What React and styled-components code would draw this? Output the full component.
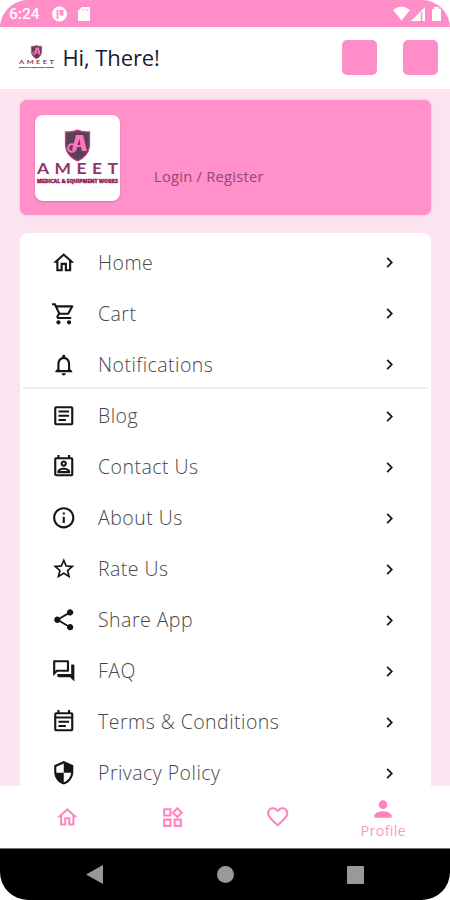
import React from "react";
import styled, { createGlobalStyle } from "styled-components";
import {
  MdOutlineHome, MdOutlineShoppingCart, MdNotificationsNone, MdOutlineArticle,
  MdOutlinePermContactCalendar, MdInfoOutline, MdStarOutline, MdShare,
  MdOutlineForum, MdOutlineEventNote, MdSecurity, MdChevronRight,
  MdOutlineWidgets, MdFavoriteBorder, MdPerson,
} from "react-icons/md";

const Global = createGlobalStyle`
  * { box-sizing: border-box; }
  body { margin: 0; background: #fff; font-family: "Open Sans", "Noto Sans", sans-serif; }
`;

const Phone = styled.div`
  width: 450px;
  height: 900px;
  display: flex;
  flex-direction: column;
  overflow: hidden;
  border-radius: 28px;
  background: #fbe3ef;
`;

const StatusBar = styled.div`
  height: 26.5px;
  flex: none;
  display: flex;
  align-items: center;
  padding: 1px 0 0 9px;
  background: #ff8dc8;
  color: #fff;
  font: 500 15.5px/20px Roboto, sans-serif;
`;

const StatusIcon = styled.svg`
  display: block;
  flex: none;
  margin-left: ${(p) => p.$gap || 0}px;
  fill: #fff;
`;

const Header = styled.header`
  height: 62px;
  flex: none;
  display: flex;
  align-items: center;
  padding: 0 12.5px 0 18px;
  background: #fff;
`;

const Greeting = styled.h1`
  flex: 1;
  margin: -1px 0 0 7.5px;
  font-size: 22px;
  line-height: 30px;
  font-weight: 400;
  letter-spacing: -0.1px;
  color: #171a36;
`;

const HeaderButton = styled.button`
  width: 35px;
  height: 35px;
  margin: 0 0 0 26px;
  padding: 0;
  border: 0;
  border-radius: 5px;
  background: #ff8dc8;
`;

const Content = styled.main`
  flex: 1;
  min-height: 0;
  overflow: hidden;
  padding: 11.5px 19px 0 20px;
`;

const LoginCard = styled.section`
  height: 115px;
  display: flex;
  padding: 15px;
  border-radius: 7px;
  background: #ff90c9;
  box-shadow: 0 0 2px #ff90c9;
`;

const LogoTile = styled.div`
  width: 85px;
  height: 86px;
  border-radius: 8px;
  background: #fff;
  box-shadow: 0 1px 2px rgba(140, 40, 90, 0.3);
`;

const LogoMark = styled.svg`
  display: block;
  flex: none;
`;

const LoginLink = styled.span`
  margin: 51px 0 0 34px;
  font-size: 14.7px;
  line-height: 21px;
  letter-spacing: 0.25px;
  font-weight: 400;
  color: #924874;
`;

const Menu = styled.nav`
  height: 600px;
  margin-top: 18px;
  padding: 4px 3px 0;
  border-radius: 8px;
  background: #fff;
`;

const MenuRow = styled.div`
  height: 51px;
  display: flex;
  align-items: center;
  padding: 0 28px;
  color: #161616;
  svg { flex: none; }
`;

const Label = styled.span`
  flex: 1;
  margin-left: 21.5px;
  padding-top: 0.5px;
  font-size: 19.5px;
  line-height: 26px;
  font-weight: 300;
  letter-spacing: 0.47px;
  color: #474747;
`;

const Divider = styled.div`
  height: 2px;
  margin: -3px 0 1.5px;
  background: #ededed;
`;

const TabBar = styled.nav`
  height: 62px;
  flex: none;
  display: grid;
  grid-template-columns: repeat(4, 105.5px);
  justify-content: center;
  background: #fff;
  color: #ff85c2;
`;

const Tab = styled.div`
  display: flex;
  flex-direction: column;
  align-items: center;
  justify-content: center;
  padding-top: ${(p) => (p.$active ? 2 : 0)}px;
  font-size: 14.5px;
  line-height: 18px;
`;

const TabLabel = styled.span`
  font-weight: 400;
  letter-spacing: 0.25px;
  color: #ff98cb;
`;

const SystemBar = styled.div`
  height: 52px;
  flex: none;
  display: flex;
  justify-content: space-between;
  align-items: center;
  padding: 0 86px;
  border-top: 1px solid #777;
  background: #000;
`;

const Logo = ({ width, height }) => (
  <LogoMark width={width} height={height} viewBox="0 0 85 86">
    <path d="M30.500 17Q38 17 42.500 15Q47 17 54.500 17V31Q53.500 41 42.500 46Q31.500 41 30.500 31Z" fill="#5b4058" stroke="#cc3d83" strokeWidth="1.300" />
    <path d="M41 20h7l4 16h-5l-1-4h-4l-1 3h-4zM44.500 24l-2 6h3z" fill="#ff75b9" />
    <circle cx="37" cy="33" r="3.800" fill="none" stroke="#ff75b9" strokeWidth="2" />
    <g transform="translate(2 59) scale(1.200 1)">
      <text textLength="67.500" fontFamily="Lato, sans-serif" fontWeight="700" fontSize="14.500" fill="#923468">AMEET</text>
    </g>
    <text x="2" y="67.500" textLength="81" lengthAdjust="spacingAndGlyphs" fontFamily="Open Sans, sans-serif" fontWeight="800" fontSize="4.700" fill="#941f5c" stroke="#941f5c" strokeWidth=".4">MEDICAL &amp; EQUIPMENT WORKS</text>
  </LogoMark>
);

const rows = [
  [MdOutlineHome, "Home"],
  [MdOutlineShoppingCart, "Cart"],
  [MdNotificationsNone, "Notifications"],
  [MdOutlineArticle, "Blog"],
  [MdOutlinePermContactCalendar, "Contact Us"],
  [MdInfoOutline, "About Us"],
  [MdStarOutline, "Rate Us"],
  [MdShare, "Share App"],
  [MdOutlineForum, "FAQ"],
  [MdOutlineEventNote, "Terms & Conditions"],
  [MdSecurity, "Privacy Policy"],
];

export default function App() {
  return (
    <>
      <Global />
      <Phone>
        <StatusBar>
          <span>6:24</span>
          <StatusIcon $gap={12} width="15" height="16" viewBox="0 0 15 16">
            <circle cx="7.500" cy="8" r="7.500" />
            <path d="M5.500 4v9M8.500 5h2v3.500h-2z" fill="none" stroke="#ff8dc8" strokeWidth="1.800" />
          </StatusIcon>
          <StatusIcon $gap={11} width="12" height="14" viewBox="0 0 12 14">
            <path d="M4 0h7q1 0 1 1v12q0 1-1 1H1q-1 0-1-1V4z" />
            <path d="M4.500 2v2M7 2v2M9.500 2v2" stroke="#ffb3da" />
          </StatusIcon>
          <StatusIcon $gap={303} width="50" height="16" viewBox="0 0 50 16">
            <path d="M0 4Q8.500-3 17 4L8.500 14.500zM18 15 32 1v14zM39 3h2V1h5v2h2v12h-9z" />
            <path d="M28.500 6v9" stroke="#ff8dc8" strokeWidth="1.500" />
          </StatusIcon>
        </StatusBar>
        <Header>
          <Logo width={37} height={37} />
          <Greeting>Hi, There!</Greeting>
          <HeaderButton aria-label="Search" />
          <HeaderButton aria-label="Settings" />
        </Header>
        <Content>
          <LoginCard>
            <LogoTile><Logo width={85} height={86} /></LogoTile>
            <LoginLink>Login / Register</LoginLink>
          </LoginCard>
          <Menu>
            {rows.map(([Icon, text], i) => (
              <React.Fragment key={text}>
                {i === 3 && <Divider />}
                <MenuRow>
                  <Icon size={25.5} />
                  <Label>{text}</Label>
                  <MdChevronRight size={21} />
                </MenuRow>
              </React.Fragment>
            ))}
          </Menu>
        </Content>
        <TabBar>
          <Tab><MdOutlineHome size={24.5} /></Tab>
          <Tab><MdOutlineWidgets size={25} /></Tab>
          <Tab><MdFavoriteBorder size={25.5} /></Tab>
          <Tab $active><MdPerson size={26} /><TabLabel>Profile</TabLabel></Tab>
        </TabBar>
        <SystemBar>
          <svg width="17" height="19"><path d="M17 0v19L0 9.500z" fill="#999" /></svg>
          <svg width="17" height="17"><circle cx="8.500" cy="8.500" r="8.500" fill="#999" /></svg>
          <svg width="17" height="18"><rect width="17" height="18" rx="1" fill="#999" /></svg>
        </SystemBar>
      </Phone>
    </>
  );
}
